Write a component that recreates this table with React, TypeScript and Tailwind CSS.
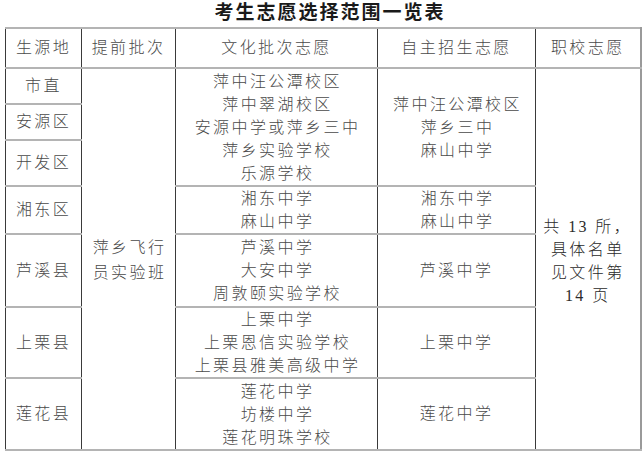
import React from 'react';

const cell =
  "border-x border-x-[#3a3a3a] border-y-2 border-y-[#b4b4b4] text-center align-middle p-0";
const last = "border-r-2 border-r-[#9a9a9a]";

const Lines = ({ items }: { items: string[] }) => (
  <div className="flex flex-col items-center leading-[23px]">
    {items.map((t, i) => (
      <span key={i} className="pl-[2px]">{t}</span>
    ))}
  </div>
);

const App = () => {
  return (
    <div className="w-[642px] h-[453px] bg-white overflow-hidden font-['Liberation_Serif','Noto_Sans_CJK_SC',serif] font-light text-[#4a4a4a]">
      <h1 className="h-[27px] pt-[1px] text-center text-[19px] leading-[24px] font-bold tracking-[2px] text-[#1a1a1a] pl-[18px]">
        考生志愿选择范围一览表
      </h1>
      <table className="ml-[5px] w-[635px] table-fixed border-collapse text-[16px] tracking-[2.4px]">
        <colgroup>
          <col className="w-[76px]" />
          <col className="w-[94px]" />
          <col className="w-[202px]" />
          <col className="w-[158px]" />
          <col className="w-[105px]" />
        </colgroup>
        <tbody>
          <tr className="h-[40px]">
            <td className={cell}>生源地</td>
            <td className={cell}>提前批次</td>
            <td className={cell}>文化批次志愿</td>
            <td className={cell}>自主招生志愿</td>
            <td className={`${cell} ${last}`}>职校志愿</td>
          </tr>
          <tr className="h-[36px]">
            <td className={cell}>市直</td>
            <td className={cell} rowSpan={7}>
              <div className="leading-[25px] pl-[2px] pt-[2px]">
                萍乡飞行
                <br />
                员实验班
              </div>
            </td>
            <td className={cell} rowSpan={3}>
              <Lines items={["萍中汪公潭校区", "萍中翠湖校区", "安源中学或萍乡三中", "萍乡实验学校", "乐源学校"]} />
            </td>
            <td className={cell} rowSpan={3}>
              <Lines items={["萍中汪公潭校区", "萍乡三中", "麻山中学"]} />
            </td>
            <td className={`${cell} ${last}`} rowSpan={7}>
              <div className="leading-[23px] pt-[4px] text-[#2a2a2a]">
                共 13 所，
                <br />
                具体名单
                <br />
                见文件第
                <br />
                14 页
              </div>
            </td>
          </tr>
          <tr className="h-[36px]">
            <td className={cell}>安源区</td>
          </tr>
          <tr className="h-[46px]">
            <td className={cell}>开发区</td>
          </tr>
          <tr className="h-[48px]">
            <td className={cell}>湘东区</td>
            <td className={cell}>
              <Lines items={["湘东中学", "麻山中学"]} />
            </td>
            <td className={cell}>
              <Lines items={["湘东中学", "麻山中学"]} />
            </td>
          </tr>
          <tr className="h-[73px]">
            <td className={cell}>芦溪县</td>
            <td className={cell}>
              <Lines items={["芦溪中学", "大安中学", "周敦颐实验学校"]} />
            </td>
            <td className={cell}>芦溪中学</td>
          </tr>
          <tr className="h-[71px]">
            <td className={cell}>上栗县</td>
            <td className={cell}>
              <Lines items={["上栗中学", "上栗恩信实验学校", "上栗县雅美高级中学"]} />
            </td>
            <td className={cell}>上栗中学</td>
          </tr>
          <tr className="h-[72px]">
            <td className={cell}>莲花县</td>
            <td className={cell}>
              <Lines items={["莲花中学", "坊楼中学", "莲花明珠学校"]} />
            </td>
            <td className={cell}>莲花中学</td>
          </tr>
        </tbody>
      </table>
    </div>
  );
};

export default App;
